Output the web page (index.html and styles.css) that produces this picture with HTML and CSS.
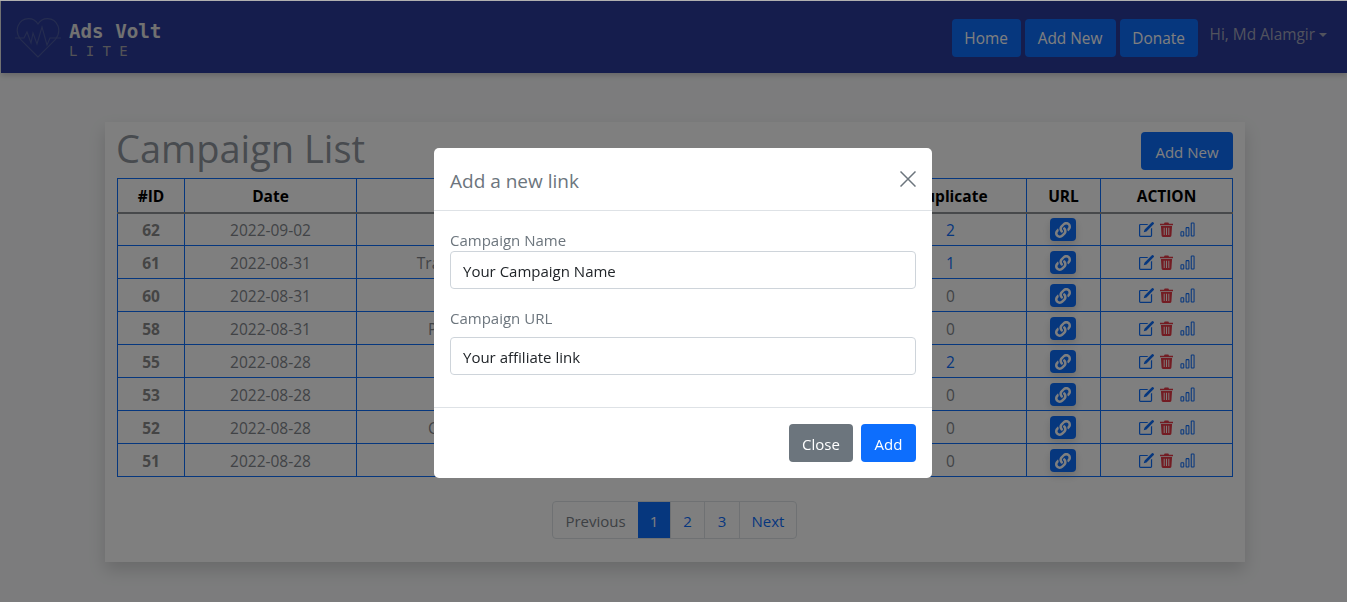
FILE: index.html
```html
<!DOCTYPE html>
<html lang="en">
<head>
<meta charset="utf-8">
<title>Ads Volt Lite</title>
<link rel="stylesheet" href="styles.css">
</head>
<body>
<nav class="navbar">
  <a class="brand">
    <svg class="brand-icon" viewBox="0 0 46 40" fill="none" stroke="currentColor" stroke-width="1.1">
      <path d="M23 39 L6 22 C2 17 1.500 12 3 8 C5 3 9 0.600 13.500 0.600 C17.500 0.600 21 2.500 23 6 C25 2.500 28.500 0.600 32.500 0.600 C37 0.600 41 3 43 8 C44.500 12 44 17 40 22 Z"/>
      <path d="M0 20 H9 L12 14 L16 25 L18 15 L22 26 L27 9 L32 27 L35 20 H46"/>
    </svg>
    <span class="brand-text"><b>Ads Volt</b><small>LITE</small></span>
  </a>
  <div class="nav-links">
    <a class="nav-btn nb-home">Home</a>
    <a class="nav-btn nb-add">Add New</a>
    <a class="nav-btn nb-don">Donate</a>
    <a class="nav-user">Hi, Md Alamgir<i class="caret"></i></a>
  </div>
</nav>

<main class="card">
  <div class="card-head">
    <h1>Campaign List</h1>
    <a class="btn btn-add">Add New</a>
  </div>
  <table class="list">
    <thead>
      <tr><th class="c-id">#ID</th><th class="c-date">Date</th><th class="c-name">Name</th><th class="c-clicks">Clicks</th><th class="c-dup">Duplicate</th><th class="c-url">URL</th><th class="c-act">ACTION</th></tr>
    </thead>
    <tbody id="rows"></tbody>
  </table>
  <div class="pager">
    <a class="pg pg-off">Previous</a><a class="pg pg-on">1</a><a class="pg pg-2">2</a><a class="pg pg-3">3</a><a class="pg pg-next">Next</a>
  </div>
</main>

<div class="backdrop"></div>
<div class="modal">
  <div class="modal-head">
    <h5>Add a new link</h5>
    <svg class="close-x" viewBox="0 0 16 16" fill="none" stroke="currentColor" stroke-width="1.500"><path d="M0.500 0.500 L15.500 15.500 M15.500 0.500 L0.500 15.500"/></svg>
  </div>
  <div class="modal-body">
    <label class="lbl">Campaign Name</label>
    <div class="input">Your Campaign Name</div>
    <label class="lbl lbl-2">Campaign URL</label>
    <div class="input">Your affiliate link</div>
  </div>
  <div class="modal-foot">
    <a class="btn btn-grey">Close</a>
    <a class="btn btn-blue">Add</a>
  </div>
</div>
<div class="topline"></div>
<script src="app.js"></script>
</body>
</html>
```
FILE: styles.css
```css
* { box-sizing: border-box; }
html, body { height: 100%; }
body {
  margin: 0;
  height: 602px;
  overflow: hidden;
  background: #f8f9fa;
  color: #212529;
  font-family: "Open Sans", "Noto Sans", sans-serif;
  font-size: 15px;
  line-height: 22px;
}
.navbar {
  height: 72px;
  margin: 1px 0 0 1px;
  background: #2b3a9b;
  box-shadow: 0 2px 6px rgba(0,0,0,.2);
  display: flex;
  align-items: center;
  justify-content: space-between;
  padding: 0 0 0 14px;
}
.brand { display: flex; align-items: flex-start; gap: 8px; height: 72px; padding-top: 17px; }
.brand-icon { width: 46px; height: 40px; color: #4b5a9f; flex: none; }
.brand-text { display: flex; flex-direction: column; font-family: "DejaVu Sans Mono", monospace; margin-top: 3px; }
.brand-text b { font-size: 19.200px; line-height: 22px; color: #e2e2e2; }
.brand-text small { font-size: 14px; line-height: 17px; letter-spacing: 8.300px; color: #a6a6ac; font-weight: 400; }
.nav-links { display: flex; align-items: center; gap: 4px; padding-right: 20px; margin-top: 2px; font-size: 15.400px; }
.nav-btn {
  background: #0d6efd;
  color: #fff;
  border-radius: 4px;
  height: 38px;
  display: flex;
  align-items: center;
  justify-content: center;
  padding-top: 2px;
}
.nb-home { width: 69px; }
.nb-add { width: 91px; }
.nb-don { width: 78px; }
.nav-user { color: #a3a6bb; margin-left: 8px; margin-top: -6px; display: flex; align-items: center; }
.caret { width: 0; height: 0; margin-left: 4px; border: 4px solid transparent; border-top-color: #a3a6bb; border-bottom: 0; }

.card {
  width: 1140px;
  height: 440px;
  margin: 49px 0 0 105px;
  padding: 10px 12px 0;
  background: #fff;
  box-shadow: 0 8px 16px rgba(0,0,0,.15);
  display: flex;
  flex-direction: column;
}
.card-head { display: flex; justify-content: space-between; align-items: flex-start; height: 46px; }
h1 { margin: -8px 0 0 -1px; font-size: 38px; line-height: 48px; font-weight: 400; color: #90979f; }
.btn { display: flex; align-items: center; justify-content: center; height: 38px; border-radius: 4px; color: #fff; }
.btn-add { background: #0d6efd; width: 92px; padding-top: 2px; }
.list { width: 1115px; border-collapse: collapse; table-layout: fixed; color: #83878d; font-size: 15.500px; }
.list th, .list td { border: 1px solid #0d6efd; padding: 1px 0 0; text-align: center; height: 33px; font-weight: 400; }
.list th { color: #000; font-weight: 700; padding: 2px 0 0; height: 34px; }
.list thead th { border-bottom: 2px solid #8f9296; }
.c-id { width: 67px; }
.c-date { width: 172px; }
.c-name { width: 200px; }
.c-clicks { width: 318px; }
.c-dup { width: 152px; }
.c-url { width: 74px; }
.c-act { width: 132px; }
.list td.id { font-weight: 700; color: #8a8a8a; }
.list td.num { color: #0d6efd; }
.link-btn { display: flex; align-items: center; justify-content: center; width: 26px; height: 23px; border-radius: 4px; margin: 0 24px 0 23px; background: #0d6efd; color: #fff; box-shadow: 0 4px 8px rgba(0,0,0,.15); }
.link-btn svg { width: 16px; height: 16px; }
.acts { display: flex; justify-content: center; align-items: center; gap: 6px; }
.ic { width: 15px; height: 15px; flex: none; }
.ic-blue { color: #0d6efd; }
.ic-red { color: #e63946; width: 13px; }
.ic-bars { margin-left: 1px; }
.pager { display: flex; align-self: center; margin: 24px 1px 0 0; height: 38px; border: 1px solid #dee2e6; border-radius: 4px; }
.pg { display: flex; align-items: center; justify-content: center; padding-top: 1px; color: #0d6efd; border-left: 1px solid #dee2e6; width: 34px; }
.pg-off { color: #7a8188; border-left: 0; width: 85px; }
.pg-on { background: #0d6efd; color: #fff; border-left: 0; width: 32px; }
.pg-3 { width: 35px; }
.pg-next { width: 57px; }

.backdrop { position: fixed; inset: 0; background: rgba(0,0,0,.5); }
.topline { position: fixed; left: 0; top: 0; width: 100%; height: 1px; background: #b0b0b0; }
.modal {
  position: fixed;
  left: 434px;
  top: 148px;
  width: 498px;
  height: 330px;
  background: #fff;
  border-radius: 5px;
  display: flex;
  flex-direction: column;
}
.modal-head { height: 63px; border-bottom: 1px solid #dee2e6; display: flex; align-items: center; justify-content: space-between; padding: 0 16px; }
h5 { margin: 4px 0 0; font-size: 19px; font-weight: 400; line-height: 26px; color: #6c757d; }
.close-x { width: 16px; height: 16px; color: #6c757d; margin: 0; flex: none; }
.modal-body { height: 197px; padding: 17px 16px 0; border-bottom: 1px solid #dee2e6; }
.lbl { display: block; color: #6c757d; height: 23px; line-height: 24px; }
.lbl-2 { margin-top: 17px; height: 31px; }
.input { height: 38px; border: 1px solid #ced4da; border-radius: 4px; padding: 1px 12px 0; display: flex; align-items: center; color: #212529; }
.modal-foot { flex: 1; display: flex; justify-content: flex-end; align-items: flex-start; gap: 8px; padding: 16px 16px 0; }
.btn-grey { background: #6c757d; width: 64px; padding-top: 2px; }
.btn-blue { background: #0d6efd; width: 55px; padding-top: 2px; }
```
FILE: app.js
```js
var data = [
  [62, "2022-09-02", "", 2], [61, "2022-08-31", "Traffic Test", 1],
  [60, "2022-08-31", "", 0], [58, "2022-08-31", "Product", 0],
  [55, "2022-08-28", "", 2], [53, "2022-08-28", "", 0],
  [52, "2022-08-28", "Coupon", 0], [51, "2022-08-28", "", 0]
];
var link = '<a class="link-btn"><svg viewBox="0 0 512 512" fill="currentColor"><path d="M326.600 185.400c59.700 59.800 58.900 155.700.4 214.600l-67.200 67.200c-59.300 59.300-155.700 59.300-215 0-59.300-59.300-59.300-155.700 0-215l37.100-37.100c9.800-9.800 26.800-3.300 27.300 10.600.6 17.700 3.800 35.500 9.700 52.700 2 5.800.6 12.300-3.800 16.600l-13.100 13.100c-28 28-28.900 73.700-1.200 102 28 28.600 74.100 28.700 102.300.5l67.200-67.200c28.200-28.200 28.100-73.800 0-101.800-3.700-3.700-7.400-6.600-10.300-8.600-4.700-3.200-7.700-8.600-7.900-14.300-.4-10.600 3.400-21.500 11.700-29.800l21.100-21.100c5.500-5.500 14.200-6.200 20.600-1.700 7.300 5.100 14.200 10.800 20.600 17.100zM467.500 44.500c-59.300-59.300-155.700-59.300-215 0l-67.200 67.200c-58.500 58.900-59.300 154.800.4 214.600 6.400 6.300 13.300 12 20.600 17.100 6.400 4.500 15.100 3.800 20.600-1.700l21.100-21.100c8.300-8.300 12.100-19.200 11.700-29.800-.2-5.700-3.200-11.100-7.900-14.300-2.900-2-6.600-4.900-10.300-8.600-28.100-28-28.200-73.600 0-101.800l67.200-67.200c28.200-28.200 74.300-28.100 102.300.5 27.700 28.300 26.800 74-1.200 102l-13.100 13.100c-4.400 4.300-5.800 10.800-3.800 16.600 5.900 17.200 9.100 35 9.700 52.700.5 13.900 17.500 20.400 27.300 10.600l37.100-37.100c59.300-59.300 59.300-155.700 0-215z"/></svg></a>';
var acts = '<div class="acts">' +
  '<svg class="ic ic-blue" viewBox="0 0 16 16" fill="currentColor"><path d="M15.500 0.500a1.400 1.400 0 0 1 0 2L8 10l-3 1 1-3 7.500-7.500a1.400 1.400 0 0 1 2 0z"/><path fill-rule="evenodd" d="M1.500 2H10L8.700 3.300H1.300v11.400h11.400V7.300L14 6v8.500a1.500 1.500 0 0 1-1.500 1.500h-11A1.500 1.500 0 0 1 0 14.500v-11A1.500 1.500 0 0 1 1.500 2z"/></svg>' +
  '<svg class="ic ic-red" viewBox="0 0 14 16" fill="currentColor"><path d="M0 1.700h4.300L5 .4h4l.7 1.300H14V3.400H0z"/><path fill-rule="evenodd" d="M1 4.200h12l-.7 10.300A1.500 1.500 0 0 1 10.800 16H3.200a1.500 1.500 0 0 1-1.500-1.500zM4 6v8h1V6zm2.500 0v8h1V6zM9 6v8h1V6z"/></svg>' +
  '<svg class="ic ic-blue ic-bars" viewBox="0 0 16 16" fill="none" stroke="currentColor" stroke-width="1.100"><rect x="1" y="10.500" width="3" height="4.500" rx=".6"/><rect x="6.500" y="6" width="3" height="9" rx=".6"/><rect x="12" y="1" width="3" height="14" rx=".6"/></svg>' +
  '</div>';
document.getElementById("rows").innerHTML = data.map(function (r) {
  return '<tr><td class="id">' + r[0] + '</td><td>' + r[1] + '</td><td>' + r[2] + '</td><td></td><td class="' + (r[3] ? 'num' : '') + '">' + r[3] + '</td><td>' + link + '</td><td>' + acts + '</td></tr>';
}).join("");
```
